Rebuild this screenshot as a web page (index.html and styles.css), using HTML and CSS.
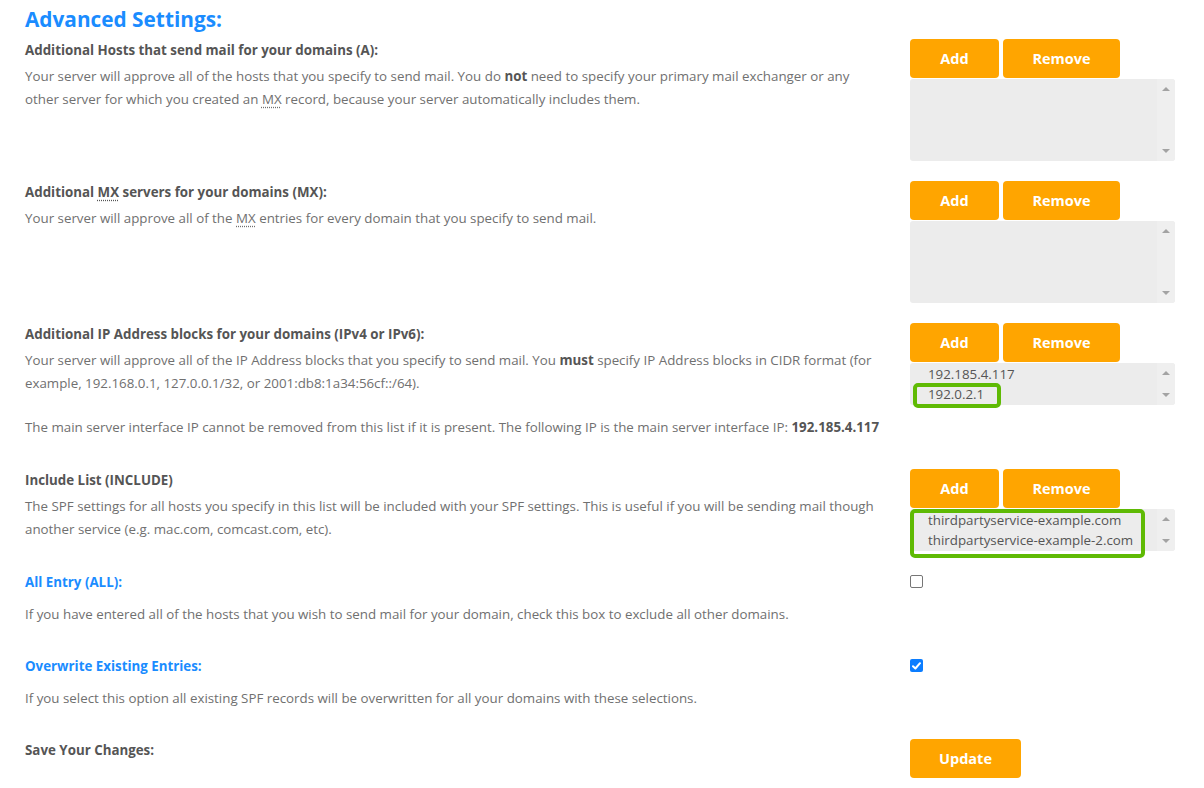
FILE: index.html
```html
<!DOCTYPE html>
<html>
<head>
<meta charset="utf-8">
<link rel="stylesheet" href="styles.css">
</head>
<body>
<div class="page">
  <h2 class="title">Advanced Settings:</h2>

  <div class="row">
    <div class="left">
      <div class="label">Additional Hosts that send mail for your domains (A):</div>
      <p class="desc">Your server will approve all of the hosts that you specify to send mail. You do <b>not</b> need to specify your primary mail exchanger or any other server for which you created an <abbr>MX</abbr> record, because your server automatically includes them.</p>
    </div>
    <div class="right">
      <div class="btns"><button class="btn add">Add</button><button class="btn remove">Remove</button></div>
      <div class="list tall">
        <div class="opts"></div>
        <div class="sbar"><span class="up"></span><span class="down"></span></div>
      </div>
    </div>
  </div>

  <div class="row">
    <div class="left">
      <div class="label">Additional <abbr>MX</abbr> servers for your domains (MX):</div>
      <p class="desc">Your server will approve all of the <abbr>MX</abbr> entries for every domain that you specify to send mail.</p>
    </div>
    <div class="right">
      <div class="btns"><button class="btn add">Add</button><button class="btn remove">Remove</button></div>
      <div class="list tall">
        <div class="opts"></div>
        <div class="sbar"><span class="up"></span><span class="down"></span></div>
      </div>
    </div>
  </div>

  <div class="row">
    <div class="left">
      <div class="label">Additional IP Address blocks for your domains (IPv4 or IPv6):</div>
      <p class="desc">Your server will approve all of the IP Address blocks that you specify to send mail. You <b>must</b> specify IP Address blocks in CIDR format (for example, 192.168.0.1, 127.0.0.1/32, or 2001:db8:1a34:56cf::/64).</p>
      <p class="desc gap">The main server interface IP cannot be removed from this list if it is present. The following IP is the main server interface IP: <b>192.185.4.117</b></p>
    </div>
    <div class="right">
      <div class="btns"><button class="btn add">Add</button><button class="btn remove">Remove</button></div>
      <div class="list short">
        <div class="opts">
          <div class="opt">192.185.4.117</div>
          <div class="opt">192.0.2.1</div>
        </div>
        <div class="sbar"><span class="up"></span><span class="down"></span></div>
        <div class="mark mark-ip"></div>
      </div>
    </div>
  </div>

  <div class="row">
    <div class="left">
      <div class="label">Include List (INCLUDE)</div>
      <p class="desc">The SPF settings for all hosts you specify in this list will be included with your SPF settings. This is useful if you will be sending mail though another service (e.g. mac.com, comcast.com, etc).</p>
    </div>
    <div class="right">
      <div class="btns"><button class="btn add">Add</button><button class="btn remove">Remove</button></div>
      <div class="list short">
        <div class="opts">
          <div class="opt">thirdpartyservice-example.com</div>
          <div class="opt">thirdpartyservice-example-2.com</div>
        </div>
        <div class="sbar"><span class="up"></span><span class="down"></span></div>
        <div class="mark mark-inc"></div>
      </div>
    </div>
  </div>

  <div class="row">
    <div class="left">
      <div class="label blue">All Entry (ALL):</div>
      <p class="desc wide">If you have entered all of the hosts that you wish to send mail for your domain, check this box to exclude all other domains.</p>
    </div>
    <div class="right">
      <span class="check"></span>
    </div>
  </div>

  <div class="row">
    <div class="left">
      <div class="label blue">Overwrite Existing Entries:</div>
      <p class="desc wide">If you select this option all existing SPF records will be overwritten for all your domains with these selections.</p>
    </div>
    <div class="right">
      <span class="check on"><svg width="9" height="8" viewBox="0 0 9 8"><path d="M1 4.2 L3.4 6.5 L8 1.2" fill="none" stroke="#fff" stroke-width="2" stroke-linecap="round" stroke-linejoin="round"/></svg></span>
    </div>
  </div>

  <div class="row">
    <div class="left">
      <div class="label">Save Your Changes:</div>
    </div>
    <div class="right">
      <button class="btn update">Update</button>
    </div>
  </div>
</div>
</body>
</html>
```
FILE: styles.css
```css
html, body {
  margin: 0;
  padding: 0;
  background: #fff;
}
body {
  font-family: "Open Sans", "Liberation Sans", sans-serif;
  font-size: 13.33px;
  color: #707070;
}
.page {
  padding: 0 29px 0 25px;
}
.title {
  margin: 0;
  padding-top: 5px;
  font-size: 20.8px;
  line-height: 28px;
  font-weight: 700;
  color: #1a8cff;
  height: 34px;
}
.row {
  display: flex;
  margin-bottom: 20px;
}
.left {
  width: 885px;
}
.right {
  width: 265px;
}
.label {
  font-weight: 700;
  color: #555;
  line-height: 23px;
}
.label.blue {
  color: #1a8cff;
}
.desc {
  margin: 3px 0 10px;
  line-height: 23px;
  max-width: 856px;
}
.desc.gap {
  margin-top: 21px;
}
.desc.wide {
  margin-top: 9px;
  margin-bottom: 9px;
}
.desc b {
  color: #555;
}
abbr {
  text-decoration: underline dotted;
  text-underline-offset: 3px;
}
.btns {
  display: flex;
  gap: 4px;
}
.btn {
  border: none;
  background: #ffa500;
  color: #fff;
  font-family: "Open Sans", "Liberation Sans", sans-serif;
  font-weight: 700;
  font-size: 14.5px;
  height: 39px;
  border-radius: 4px;
  padding: 0;
  cursor: pointer;
}
.btn.add { width: 89px; }
.btn.remove { width: 117px; }
.btn.update { width: 111px; }
.list {
  position: relative;
  margin-top: 1px;
  display: flex;
  background: #ececec;
  border-radius: 3px;
}
.list.tall { height: 82px; }
.list.short { height: 42px; }
.opts {
  flex: 1;
  padding: 1px 0 0 18px;
}
.opt {
  color: #555;
  font-size: 13.33px;
  line-height: 20px;
}
.sbar {
  width: 18px;
  background: #efefef;
  border-radius: 0 3px 3px 0;
  display: flex;
  flex-direction: column;
  justify-content: space-between;
  align-items: center;
  padding: 8px 0;
}
.up, .down {
  width: 0;
  height: 0;
  border-left: 4px solid transparent;
  border-right: 4px solid transparent;
}
.up { border-bottom: 4px solid #a3a3a3; }
.down { border-top: 4px solid #a3a3a3; }
.mark {
  position: absolute;
  border: 4px solid #5fba04;
  border-radius: 5px;
}
.mark-ip {
  left: 3px;
  top: 20px;
  width: 80px;
  height: 17px;
}
.mark-inc {
  left: 0;
  top: 0;
  width: 227px;
  height: 41px;
}
.check {
  display: block;
  margin-top: 4px;
  width: 11px;
  height: 11px;
  border: 1px solid #767676;
  border-radius: 2px;
  background: #fff;
}
.check.on {
  width: 13px;
  height: 13px;
  border: none;
  background: #0b7dff;
  display: flex;
  align-items: center;
  justify-content: center;
}
```
